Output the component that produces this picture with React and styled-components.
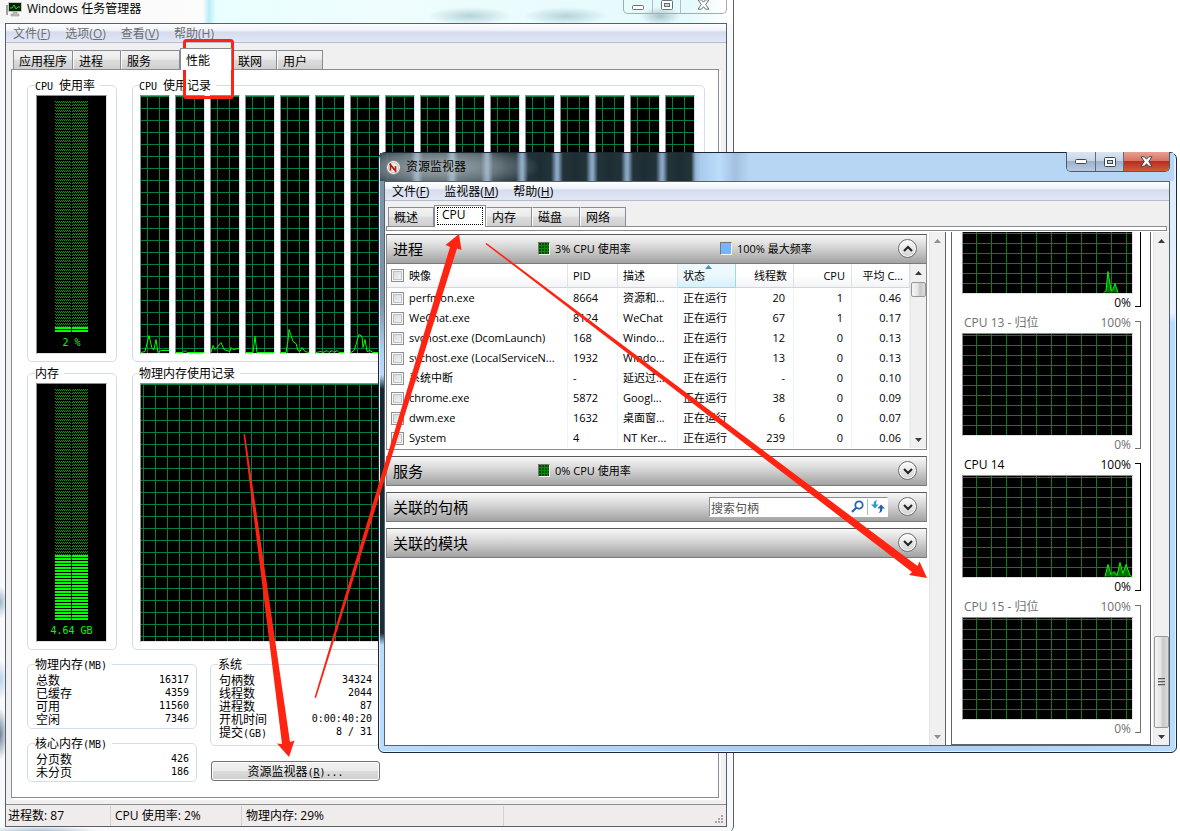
import React from "react";
import styled, { createGlobalStyle, css } from "styled-components";

const ui = `"Open Sans", "Noto Sans CJK SC", sans-serif`;
const song = `"Noto Sans CJK SC", sans-serif`;

const Global = createGlobalStyle`
  *, *::before, *::after { box-sizing: border-box; }
  html, body { margin: 0; background: #fff; }
  body { font: 12px/16px ${ui}; color: #000; overflow: hidden; }
  button, input { font: inherit; color: inherit; margin: 0; padding: 0; border-radius: 0; }
  svg { display: block; flex: none; }
`;

const Desktop = styled.div`
  position: relative;
  min-height: 100vh;
  overflow: hidden;
`;

/* ---------- window frames ---------- */

const TaskWindow = styled.section`
  display: flex;
  flex-direction: column;
  min-height: 100vh;
  margin-right: 446px;
  padding: 0 6px 5px 5px;
  border-right: 1px solid #5c6066;
  border-radius: 0 0 6px 0;
  background:
    radial-gradient(8px 16px at 0 602px, #9fb6cc, transparent),
    radial-gradient(8px 20px at 0 680px, #b9d3ea, transparent),
    radial-gradient(8px 26px at 0 734px, #6e8296, transparent),
    radial-gradient(60px 6px at 40px 100%, #9fb6cc, transparent),
    radial-gradient(42px 9px at 470px 16px, #b4d4da, transparent),
    radial-gradient(42px 9px at 566px 16px, #b4d4da, transparent),
    radial-gradient(20px 9px at 660px 16px, #a9c4cc, transparent),
    linear-gradient(90deg, #f6f6f6, #fcfcfc 203px, #b8eef8 209px, #e9ffff 216px, #effdfd 380px, #e4fafc 690px, #fff 726px) top / 100% 24px no-repeat,
    #f8f9fa;
`;

const MonitorWindow = styled.section`
  position: absolute;
  top: 152px;
  right: 3px;
  bottom: 79px;
  left: 378px;
  display: flex;
  flex-direction: column;
  padding: 0 6px 6px 5px;
  border: 1px solid #1d2733;
  border-radius: 7px 7px 6px 6px;
  box-shadow: inset 0 0 0 1px #e4f2ff;
  background:
    linear-gradient(#8094a8, #7d92a6 150px, #b0d2f5 200px, #b8dcff 222px, #16262c 236px, #1c2e34 480px, #b8dcff 492px, #b8dcff) left / 6px 100% no-repeat,
    linear-gradient(#d7ecfb, #e6f3fc 160px, #b8dcff 170px) right / 7px 100% no-repeat,
    linear-gradient(90deg, #b8dcff, #a8ccf0 60%, #b8dcff) bottom / 100% 7px no-repeat,
    #b8dcff;
`;

const TaskTitle = styled.header`
  display: flex;
  align-items: flex-start;
  gap: 5px;
  height: 23px;
  padding: 1px 0 0 1px;
`;

const MonitorTitle = styled.header`
  display: flex;
  align-items: center;
  gap: 5px;
  height: 28px;
  margin: 0 -4px;
  padding: 0 4px 0 6px;
  background:
    radial-gradient(100px 24px at 60px 14px, rgba(190, 198, 202, 0.85), rgba(170, 182, 190, 0.5) 60%, transparent),
    linear-gradient(90deg, transparent 312px, #a9cbec 320px, #bcdcfb 340px, #a3c0e0 355px, #b6d6f4 370px),
    repeating-linear-gradient(90deg, #22343a 0, #1d2d33 12px, #22343a 23px, #86a3c0 28px, #8ba9c6 30px, #22343a 35px) 8px 0;
`;

const Title = styled.h1`
  margin: 0;
  font-size: 12px;
  line-height: 16px;
  font-weight: 400;
`;

const Caption = styled.div`
  display: flex;
  align-self: flex-start;
  height: ${(p) => (p.$active ? 20 : 14)}px;
  margin: -1px 0 0 auto;
  overflow: hidden;
  border: 1px solid ${(p) => (p.$active ? "#4c5b6c" : "#a3adb0")};
  border-top: 0;
  border-radius: 0 0 5px 5px;
`;

const CaptionButton = styled.button`
  display: flex;
  align-items: ${(p) => (p.$active ? "center" : "flex-end")};
  justify-content: center;
  width: ${(p) => (p.$wide ? 46 : 28)}px;
  padding-bottom: ${(p) => (p.$active ? 0 : 3)}px;
  border: 0;
  border-left: ${(p) => (p.$first ? 0 : 1)}px solid ${(p) => (p.$active ? "#5d6c7d" : "#b4bcbe")};
  background: transparent;
  ${(p) => p.$active && css`background: linear-gradient(#dbe6f1, #c6d5e5 45%, #9db2c9 50%, #b7cbe0);`}
  ${(p) => p.$active && p.$wide && css`background: linear-gradient(#e8a090, #d57566 45%, #b92e1c 50%, #cf5a3a);`}
`;

const Client = styled.div`
  flex: 1;
  display: flex;
  flex-direction: column;
  min-height: 0;
  border: 1px solid #56616c;
  background: #f0f0f0;
`;

/* ---------- shared menu and tabs ---------- */

const MenuBar = styled.nav`
  display: flex;
  align-items: center;
  gap: 15px;
  height: 19px;
  padding: 2px 0 0 7px;
  border-bottom: 1px solid #b6bccc;
  background: linear-gradient(#fff, #f0f3fa 35%, #d6dcee 45%, #e2e7f5);
  color: ${(p) => (p.$dim ? "#6d6d6d" : "#000")};
`;

const MenuItem = styled.button`
  border: 0;
  background: none;
  line-height: 16px;
  white-space: nowrap;
`;

const TabList = styled.div`
  display: flex;
  align-items: flex-end;
  height: ${(p) => (p.$tall ? 26 : 25)}px;
  padding-left: ${(p) => (p.$tall ? 7 : 3)}px;
`;

const Tab = styled.button`
  width: ${(p) => p.$w}px;
  height: 19px;
  padding: 1px 5px 0;
  border: 1px solid #898c95;
  border-bottom: 0;
  border-left-color: ${(p) => (p.$first ? "#898c95" : "#fff")};
  background: linear-gradient(#f2f2f2, #ebebeb 45%, #dcdcdc 50%, #cfcfcf);
  font-family: ${(p) => (p.$song ? song : ui)};
  line-height: 17px;
  text-align: left;
  white-space: nowrap;
  ${(p) => p["aria-selected"] && css`
    z-index: 1;
    height: 22px;
    margin-bottom: -1px;
    padding-bottom: 2px;
    border-left-color: #898c95;
    background: #fff;
  `}
`;

const FocusRing = styled.span`
  display: block;
  height: 18px;
  margin: 0 -3px;
  padding-left: 4px;
  border: 1px dotted #000;
  line-height: 14px;
`;

/* ---------- task manager ---------- */

const PerfPane = styled.main`
  flex: 1;
  display: flex;
  flex-direction: column;
  margin: 0 7px 6px 5px;
  padding: 9px 13px 15px 15px;
  border: 1px solid #898c95;
  box-shadow: 2px 2px 0 #fff;
  background: #fff;
  font-family: ${song};
`;

const ChartGrid = styled.div`
  display: grid;
  grid-template-columns: 90px 1fr;
  gap: 5px 15px;
`;

const Group = styled.fieldset`
  min-width: 0;
  margin: 0;
  padding: ${(p) => (p.$chart ? "4px 9px 7px 7px" : "3px 7px 3px 8px")};
  ${(p) => p.$gauge && css`padding-left: 8px;`}
  border: 1px solid #d3dde6;
  border-radius: 5px;
`;

const Legend = styled.legend`
  padding: 0 5px 0 0;
  margin-left: -1px;
  height: 12px;
  line-height: 12px;
  white-space: nowrap;
`;

const Mono = styled.span`
  font: 10px/8px "DejaVu Sans Mono", monospace;
`;

const sunken = css`
  border: 1px solid;
  border-color: #8c8c8c #e2e2e2 #e2e2e2 #8c8c8c;
`;

const GaugeBox = styled.div`
  ${sunken}
  display: flex;
  flex-direction: column;
  align-items: center;
  gap: 6px;
  height: 259px;
  padding-top: 5px;
  background: #000;
  color: #0f0;
`;

const Histories = styled.div`
  display: flex;
  gap: 5px;
`;

const Plot = styled.div`
  ${sunken}
  flex: ${(p) => (p.$fixed ? "none" : "1 1 0")};
  min-width: 0;
  height: ${(p) => p.$h}px;
  overflow: hidden;
  background:
    linear-gradient(90deg, ${(p) => p.$line} 1px, transparent 1px) ${(p) => p.$x}px 0 / ${(p) => p.$cw}px 100%,
    linear-gradient(${(p) => p.$line} 1px, transparent 1px) 0 ${(p) => p.$y}px / 100% ${(p) => p.$ch}px,
    #000;
`;

const Lower = styled.div`
  display: flex;
  gap: 13px;
  margin-top: 8px;
`;

const Column = styled.div`
  display: flex;
  flex-direction: column;
  gap: ${(p) => p.$gap}px;
  width: 170px;
`;

const Stats = styled.dl`
  margin: 0;
  padding-bottom: ${(p) => (p.$roomy ? 4 : 0)}px;
`;

const Stat = styled.div`
  display: flex;
  justify-content: space-between;
  height: 13px;
  line-height: 13px;
  dt, dd { margin: 0; white-space: nowrap; }
  dd { font: 10px/13px "DejaVu Sans Mono", monospace; }
`;

const ResourceButton = styled.button`
  height: 20px;
  margin-left: 1px;
  border: 1px solid #707070;
  border-radius: 3px;
  box-shadow: inset 0 0 0 1px #fcfcfc;
  background: linear-gradient(#f2f2f2, #ebebeb 48%, #dcdcdc 50%, #cfcfcf);
  line-height: 16px;
`;

const StatusBar = styled.footer`
  display: flex;
  height: 22px;
  border-top: 1px solid #898c95;
  background: #f0ecec;
`;

const StatusCell = styled.span`
  width: ${(p) => p.$w}px;
  margin-top: 1px;
  padding: 1px 0 0 ${(p) => p.$pad}px;
  border-right: 1px solid #d4d0d0;
  line-height: 18px;
  white-space: nowrap;
`;

const Grip = styled.svg`
  align-self: flex-end;
  margin: 0 2px 2px auto;
`;

/* ---------- resource monitor ---------- */

const PaneEdge = styled.div`
  height: 5px;
  margin: 0 2px 0 1px;
  border: 1px solid #898c95;
  background: #fff;
`;

const Body = styled.div`
  flex: 1;
  display: flex;
  min-height: 0;
  padding-top: 1px;
  background: #fff;
`;

const LeftPanel = styled.div`
  flex: 1;
  display: flex;
  min-width: 0;
  margin-right: 5px;
  border-right: 1px solid #5f6468;
`;

const Sections = styled.div`
  flex: 1;
  display: flex;
  flex-direction: column;
  gap: 6px;
  min-width: 0;
  padding: 2px 2px 0 1px;
`;

const SectionHead = styled.header`
  display: flex;
  align-items: center;
  height: 30px;
  padding: 0 9px 1px 6px;
  border: 1px solid #6a6a6a;
  border-color: #5a5a5a #8a8a8a #7a7a7a;
  background: linear-gradient(#f8f8f8, #d4d4d4 45%, #a2a2a2);
  font-size: 11px;
`;

const SectionTitle = styled.h2`
  flex: 0 0 145px;
  margin: 0;
  font: 400 15px/20px ${song};
  white-space: nowrap;
`;

const Meter = styled.span`
  display: flex;
  align-items: center;
  gap: 5px;
  flex: ${(p) => (p.$last ? "none" : "0 0 182px")};
  white-space: nowrap;
`;

const Swatch = styled.i`
  width: 12px;
  height: 13px;
  border: 1px solid;
  border-color: #777 #f4f4f4 #f4f4f4 #777;
  background: ${(p) =>
    p.$blue
      ? "#74b5ff"
      : "radial-gradient(circle at 1px 1px, #004c00 1px, transparent 1px) 0 0 / 3px 3px, #0a8a0a"};
`;

const Round = styled.button`
  display: grid;
  flex: none;
  place-items: center;
  width: 19px;
  height: 19px;
  margin-left: auto;
  border: 1px solid #6f6f6f;
  border-radius: 50%;
  box-shadow: inset 0 0 0 1px #fff;
  background: linear-gradient(#fdfdfd, #d2d2d2);
`;

const Search = styled.div`
  display: flex;
  align-items: center;
  width: 179px;
  height: 20px;
  margin: 0 10px 0 auto;
  padding-left: 1px;
  border: 1px solid #fff;
  border-color: #8f8f8f #fff #fff #8f8f8f;
  background: #fff;
  & + button { margin-left: 0; }
`;

const SearchInput = styled.input`
  flex: 1;
  min-width: 0;
  height: 18px;
  padding-top: 3px;
  border: 0;
  outline: 0;
  background: none;
  font-size: 12px;
  &::placeholder { color: #555; opacity: 1; }
`;

const IconButton = styled.button`
  display: grid;
  place-items: center;
  width: 20px;
  height: 16px;
  border: 0;
  border-left: ${(p) => (p.$split ? 1 : 0)}px solid #b8b8b8;
  background: none;
`;

const TableBox = styled.div`
  display: flex;
  padding-bottom: 1px;
  border: 1px solid #8a8a8a;
  border-top: 0;
`;

const Table = styled.table`
  flex: 1;
  width: 0;
  table-layout: fixed;
  border-collapse: separate;
  border-spacing: 0;
  font-size: 11px;
  line-height: 14px;
`;

const cell = css`
  overflow: hidden;
  padding: 0 ${(p) => (p.$right ? 8 : 2)}px 0 ${(p) => (p.$name ? 4 : 5)}px;
  text-align: ${(p) => (p.$right ? "right" : "left")};
  font-weight: 400;
  white-space: nowrap;
`;

const Th = styled.th`
  ${cell}
  height: 24px;
  border-right: 1px solid #dfe3e8;
  border-bottom: 1px solid #d5d5d5;
  background: linear-gradient(#fff 45%, #f3f4f6);
  ${(p) => p.$right && css`padding-right: 6px;`}
  ${(p) => p.$sorted && css`
    border-color: #96d9f9;
    background: linear-gradient(#eef9fe 45%, #d8f0fb);
  `}
`;

const Td = styled.td`
  ${cell}
  height: 20px;
  border-right: 1px solid #ebf3fc;
`;

const CheckLabel = styled.label`
  display: flex;
  align-items: center;
  gap: 5px;
`;

const Check = styled.input`
  appearance: none;
  flex: none;
  width: 13px;
  height: 13px;
  border: 1px solid #8e8f8f;
  box-shadow: inset 0 0 0 1px #f6f6f6, inset 0 0 0 2px #bfc3c8;
  background: linear-gradient(135deg, #cfd3d8, #fafafa);
`;

const SortMark = styled.svg`
  height: 4px;
  margin: -4px auto 0;
`;

const Bar = styled.div`
  display: flex;
  flex: none;
  flex-direction: column;
  align-items: center;
  width: 16px;
  padding: ${(p) => (p.$small ? "7px 0 6px" : "7px 0 6px")};
  border-left: 1px solid #e6e6e6;
  background: #f0f0f0;
`;

const Thumb = styled.div`
  display: flex;
  flex-direction: column;
  align-items: center;
  justify-content: center;
  gap: 1px;
  width: 15px;
  height: ${(p) => p.$h}px;
  border: 1px solid #979797;
  border-radius: 2px;
  background: linear-gradient(90deg, #f5f5f5, #e4e4e6 45%, #c8c8cc 60%, #dcdce0);
  i { width: 7px; height: 2px; border-top: 1px solid #5a5a5a; background: #bbb; }
`;

const Spacer = styled.span`
  flex: ${(p) => (p.$px ? `0 0 ${p.$px}px` : 1)};
`;

const GraphPanel = styled.aside`
  display: flex;
  flex-direction: column;
  justify-content: flex-end;
  gap: 4px;
  flex: 0 0 200px;
  overflow: hidden;
  margin-right: 2px;
  padding: 0 9px 7px 10px;
  border: 1px solid #5f6468;
  border-top: 0;
`;

const GraphCard = styled.figure`
  display: flex;
  flex: none;
  gap: 2px;
  margin: 0;
  color: ${(p) => (p.$parked ? "#707070" : "#000")};
`;

const GraphMain = styled.div`
  flex: 1;
  display: flex;
  flex-direction: column;
`;

const GraphLabel = styled.figcaption`
  display: flex;
  justify-content: space-between;
  height: 18px;
  padding: 0 2px;
  line-height: 16px;
`;

const GraphZero = styled.span`
  height: 17px;
  padding: 1px 2px 0;
  line-height: 16px;
  text-align: right;
`;

const Bracket = styled.i`
  width: 6px;
  margin: 6px 0 4px;
  border: 1px solid currentColor;
  border-left: 0;
`;

const Annotations = styled.svg`
  position: absolute;
  top: 0;
  left: 0;
  pointer-events: none;
`;

/* ---------- pieces ---------- */

function CaptionButtons({ active }) {
  const ink = active ? "#3c4653" : "#6a7072";
  return (
    <Caption $active={active}>
      <CaptionButton $active={active} $first aria-label="最小化">
        <svg width="12" height="5"><rect x="0.5" y="0.5" width="11" height="4" rx="1" fill="#fff" stroke={ink} /></svg>
      </CaptionButton>
      <CaptionButton $active={active} aria-label="最大化">
        <svg width="12" height="10">
          <rect x="0.5" y="0.5" width="11" height="9" rx="1" fill="#fff" stroke={ink} />
          <rect x="3.5" y="3.5" width="5" height="3" fill="#c4d2e0" stroke={ink} />
        </svg>
      </CaptionButton>
      <CaptionButton $active={active} $wide aria-label="关闭">
        <svg width="13" height="11" viewBox="0 0 13 11">
          <path d="M1 .8h3.4l2.1 2.4L8.600.8H12L8.700 5.500 12 10.200H8.600L6.500 7.700l-2.100 2.500H1l3.300-4.700z" fill="#fff" stroke={ink} />
        </svg>
      </CaptionButton>
    </Caption>
  );
}

function Menu({ items, dim }) {
  return (
    <MenuBar $dim={dim}>
      {items.map(([name, key]) => (
        <MenuItem key={key}>{name}(<u>{key}</u>)</MenuItem>
      ))}
    </MenuBar>
  );
}

function Gauge({ lit, label, id }) {
  const litY = 232 - lit;
  return (
    <GaugeBox>
      <svg width="33" height="232">
        <defs>
          <pattern id={`${id}-off`} width="2" height="3" patternUnits="userSpaceOnUse">
            <rect width="1" height="1" fill="#00a000" />
            <rect x="1" y="1" width="1" height="1" fill="#00a000" />
          </pattern>
          <pattern id={`${id}-on`} width="2" height="3" patternUnits="userSpaceOnUse" y="1">
            <rect width="2" height="2" fill="#00ff00" />
          </pattern>
        </defs>
        {[0, 17].map((x) => (
          <g key={x}>
            <rect x={x} width="16" height={litY} fill={`url(#${id}-off)`} />
            <rect x={x} y={litY} width="16" height={lit} fill={`url(#${id}-on)`} />
          </g>
        ))}
      </svg>
      <Mono>{label}</Mono>
    </GaugeBox>
  );
}

function Spark({ points, width, height, fill = "none" }) {
  if (!points) return null;
  const d = points.map(([x, y]) => `${x},${height - 0.5 - y}`).join(" ");
  return (
    <svg width={width} height={height}>
      <polyline points={d} fill={fill} stroke="#00ff00" strokeWidth="1" />
    </svg>
  );
}

const flat = [[0, 0], [28, 0]];
const coreHistory = [
  [[0, 0], [4, 1], [8, 17], [11, 4], [13, 3], [15, 13], [17, 0], [20, 2], [28, 2]],
  [[0, 0], [7, 0], [9, 2], [11, 0], [28, 0]],
  [[0, 0], [2, 7], [4, 3], [6, 5], [10, 10], [13, 3], [19, 1], [20, 5], [22, 3], [28, 4]],
  [[0, 0], [7, 0], [9, 16], [11, 0], [28, 0]],
  [[0, 0], [5, 0], [7, 12], [8, 23], [12, 11], [15, 9], [17, 2], [19, 1], [21, 5], [24, 1], [28, 0]],
  [[0, 0], [5, 1], [7, 0], [11, 2], [13, 0], [16, 2], [18, 0], [21, 2], [23, 0], [28, 0]],
  [[0, 0], [3, 2], [5, 8], [8, 18], [11, 16], [12, 5], [14, 13], [16, 1], [19, 2], [22, 0], [28, 0]],
  flat, flat, flat, flat, flat, flat, flat, flat, flat,
];

function StatGroup({ title, unit, rows, roomy }) {
  return (
    <Group>
      <Legend>{title}{unit && <Mono>({unit})</Mono>}</Legend>
      <Stats $roomy={roomy}>
        {rows.map(([name, value, suffix]) => (
          <Stat key={name}>
            <dt>{name}{suffix && <Mono>{suffix}</Mono>}</dt>
            <dd>{value}</dd>
          </Stat>
        ))}
      </Stats>
    </Group>
  );
}

function TaskManager() {
  const tabs = [["应用程序", 60], ["进程", 48], ["服务", 59], ["性能", 52], ["联网", 45], ["用户", 46]];
  return (
    <TaskWindow>
      <TaskTitle>
        <svg width="16" height="16" viewBox="0 0 16 16">
          <path d="M0 4h2v10H0z" fill="#9aa09a" />
          <rect x="2.500" y="1.500" width="13" height="9" rx="1" fill="#082008" stroke="#c4c8c4" />
          <path d="M4 7h2l2-3 2 4 2-2h2" fill="none" stroke="#27d027" />
          <path d="M7 11h4v2h2v2H5v-2h2z" fill="#b8bcb8" stroke="#8b908b" strokeWidth="0.5" />
        </svg>
        <Title>Windows 任务管理器</Title>
        <CaptionButtons />
      </TaskTitle>
      <Client>
        <Menu dim items={[["文件", "F"], ["选项", "O"], ["查看", "V"], ["帮助", "H"]]} />
        <TabList $tall role="tablist">
          {tabs.map(([name, w], i) => (
            <Tab key={name} role="tab" $song $w={w} $first={i === 0} aria-selected={name === "性能"}>{name}</Tab>
          ))}
        </TabList>
        <PerfPane>
          <ChartGrid>
            <Group $chart $gauge>
              <Legend><Mono>CPU </Mono>使用率</Legend>
              <Gauge id="cpu" lit={6} label="2 %" />
            </Group>
            <Group $chart>
              <Legend><Mono>CPU </Mono>使用记录</Legend>
              <Histories>
                {coreHistory.map((points, i) => (
                  <Plot key={i} $h={259} $line="#008040" $x={6} $y={12} $cw={12} $ch={12}>
                    <Spark points={points} width={28} height={257} />
                  </Plot>
                ))}
              </Histories>
            </Group>
            <Group $chart $gauge>
              <Legend>内存</Legend>
              <Gauge id="mem" lit={66} label="4.64 GB" />
            </Group>
            <Group $chart>
              <Legend>物理内存使用记录</Legend>
              <Plot $h={259} $line="#008040" $x={2} $y={12} $cw={12} $ch={12} />
            </Group>
          </ChartGrid>
          <Lower>
            <Column $gap={8}>
              <StatGroup title="物理内存" unit="MB" rows={[["总数", "16317"], ["已缓存", "4359"], ["可用", "11560"], ["空闲", "7346"]]} />
              <StatGroup title="核心内存" unit="MB" rows={[["分页数", "426"], ["未分页", "186"]]} />
            </Column>
            <Column $gap={15}>
              <StatGroup
                roomy
                title="系统"
                rows={[["句柄数", "34324"], ["线程数", "2044"], ["进程数", "87"], ["开机时间", "0:00:40:20"], ["提交", "8 / 31", "(GB)"]]}
              />
              <ResourceButton>资源监视器<Mono>(<u>R</u>)...</Mono></ResourceButton>
            </Column>
          </Lower>
        </PerfPane>
        <StatusBar>
          <StatusCell $w={105} $pad={2}>进程数: 87</StatusCell>
          <StatusCell $w={131} $pad={4}>CPU 使用率: 2%</StatusCell>
          <StatusCell $w={262} $pad={4}>物理内存: 29%</StatusCell>
          <Grip width="9" height="9" fill="#a8a4a4">
            <path d="M6 0h2v2H6zM3 3h2v2H3zM6 3h2v2H6zM0 6h2v2H0zM3 6h2v2H3zM6 6h2v2H6z" />
          </Grip>
        </StatusBar>
      </Client>
    </TaskWindow>
  );
}

function ScrollArrow({ down, dim }) {
  return (
    <svg width="7" height="4" viewBox="0 0 7 4">
      <path d={down ? "M0 0h7L3.500 4z" : "M0 4h7L3.500 0z"} fill={dim ? "#8f8f8f" : "#3a3a3a"} />
    </svg>
  );
}

function Toggle({ up, label }) {
  return (
    <Round aria-label={label}>
      <svg width="10" height="8" viewBox="0 0 10 8">
        <path d={up ? "M1 6l4-4 4 4" : "M1 2l4 4 4-4"} fill="none" stroke="#222" strokeWidth="2" />
      </svg>
    </Round>
  );
}

const processes = [
  ["perfmon.exe", "8664", "资源和...", "20", "1", "0.46"],
  ["WeChat.exe", "8124", "WeChat", "67", "1", "0.17"],
  ["svchost.exe (DcomLaunch)", "168", "Windo...", "12", "0", "0.13"],
  ["svchost.exe (LocalServiceN...", "1932", "Windo...", "13", "0", "0.13"],
  ["系统中断", "-", "延迟过...", "-", "0", "0.10"],
  ["chrome.exe", "5872", "Googl...", "38", "0", "0.09"],
  ["dwm.exe", "1632", "桌面窗...", "6", "0", "0.07"],
  ["System", "4", "NT Ker...", "239", "0", "0.06"],
];

function ProcessTable() {
  return (
    <TableBox>
      <Table>
        <colgroup>
          <col />
          <col width="50" />
          <col width="60" />
          <col width="58" />
          <col width="58" />
          <col width="58" />
          <col width="58" />
        </colgroup>
        <thead>
          <tr>
            <Th $name><CheckLabel><Check type="checkbox" />映像</CheckLabel></Th>
            <Th>PID</Th>
            <Th>描述</Th>
            <Th $sorted>
              <SortMark width="7" height="4"><path d="M0 4h7L3.500 0z" fill="#4a90b8" /></SortMark>
              状态
            </Th>
            <Th $right>线程数</Th>
            <Th $right>CPU</Th>
            <Th $right>平均 C...</Th>
          </tr>
        </thead>
        <tbody>
          {processes.map(([name, pid, desc, threads, cpu, avg]) => (
            <tr key={name}>
              <Td $name><CheckLabel><Check type="checkbox" />{name}</CheckLabel></Td>
              <Td>{pid}</Td>
              <Td>{desc}</Td>
              <Td>正在运行</Td>
              <Td $right>{threads}</Td>
              <Td $right>{cpu}</Td>
              <Td $right>{avg}</Td>
            </tr>
          ))}
        </tbody>
      </Table>
      <Bar>
        <ScrollArrow />
        <Spacer $px={7} />
        <Thumb $h={15} />
        <Spacer />
        <ScrollArrow down />
      </Bar>
    </TableBox>
  );
}

/* The first core is scrolled half out of view, so its caption row stays empty. */
const cores = [
  { id: 12, points: [[141, 0], [143, 2], [145, 21], [148, 2], [150, 3], [152, 9], [155, 0]] },
  { id: 13, name: "CPU 13 - 归位", parked: true },
  { id: 14, name: "CPU 14", points: [[142, 0], [145, 12], [148, 2], [151, 5], [154, 1], [157, 14], [160, 3], [163, 12], [167, 1], [169, 0]] },
  { id: 15, name: "CPU 15 - 归位", parked: true },
];

function ResourceMonitor() {
  const tabs = [["概述", 46], ["CPU", 52], ["内存", 46], ["磁盘", 48], ["网络", 46]];
  return (
    <MonitorWindow>
      <MonitorTitle>
        <svg width="15" height="15" viewBox="0 0 15 15">
          <circle cx="7.500" cy="7.500" r="7" fill="#f6f6f6" stroke="#7b7b7b" />
          <circle cx="7.500" cy="7.500" r="5" fill="#e9efe9" stroke="#b9c4b9" />
          <path d="M4.500 10.500V4.500l5 6.500V6" fill="none" stroke="#d01818" strokeWidth="1.600" />
          <path d="M3.500 4l5 6" stroke="#901010" strokeWidth="1" />
        </svg>
        <Title>资源监视器</Title>
        <CaptionButtons active />
      </MonitorTitle>
      <Client>
        <Menu items={[["文件", "F"], ["监视器", "M"], ["帮助", "H"]]} />
        <TabList role="tablist">
          {tabs.map(([name, w], i) => (
            <Tab key={name} role="tab" $w={w} $first={i === 0} aria-selected={name === "CPU"}>
              {name === "CPU" ? <FocusRing>{name}</FocusRing> : name}
            </Tab>
          ))}
        </TabList>
        <PaneEdge />
        <Body>
          <LeftPanel>
            <Sections>
              <section>
                <SectionHead>
                  <SectionTitle>进程</SectionTitle>
                  <Meter><Swatch />3% CPU 使用率</Meter>
                  <Meter $last><Swatch $blue />100% 最大频率</Meter>
                  <Toggle up label="收起进程" />
                </SectionHead>
                <ProcessTable />
              </section>
              <SectionHead>
                <SectionTitle>服务</SectionTitle>
                <Meter><Swatch />0% CPU 使用率</Meter>
                <Toggle label="展开服务" />
              </SectionHead>
              <SectionHead>
                <SectionTitle>关联的句柄</SectionTitle>
                <Search>
                  <SearchInput placeholder="搜索句柄" aria-label="搜索句柄" />
                  <IconButton aria-label="搜索">
                    <svg width="13" height="13" viewBox="0 0 13 13" fill="none" stroke="#2a66b0">
                      <circle cx="8" cy="5" r="3.700" strokeWidth="1.800" />
                      <path d="M5.200 7.800L1 12" strokeWidth="2.200" />
                    </svg>
                  </IconButton>
                  <IconButton $split aria-label="刷新">
                    <svg width="14" height="13" viewBox="0 0 14 13">
                      <path d="M6.500 0C3.500.2 2.500 2 2.700 4.500H0l4 4 3.500-4H5C5 2.500 5 1 6.500 0z" fill="#2b9ad0" />
                      <path d="M7.500 13c3-.2 4-2 3.800-4.500H14l-4-4-3.500 4H9c0 2 0 3.500-1.500 4.500z" fill="#2560a8" />
                    </svg>
                  </IconButton>
                </Search>
                <Toggle label="展开关联的句柄" />
              </SectionHead>
              <SectionHead>
                <SectionTitle>关联的模块</SectionTitle>
                <Toggle label="展开关联的模块" />
              </SectionHead>
            </Sections>
            <Bar>
              <ScrollArrow dim />
              <Spacer />
              <ScrollArrow down dim />
            </Bar>
          </LeftPanel>
          <GraphPanel>
            {cores.map(({ id, name, parked, points }) => (
              <GraphCard key={id} $parked={parked}>
                <GraphMain>
                  <GraphLabel>{name && <><span>{name}</span><span>100%</span></>}</GraphLabel>
                  <Plot $fixed $h={103} $line="#0a8014" $x={13} $y={11} $cw={15} $ch={10}>
                    <Spark points={points} width={169} height={101} fill="#007000" />
                  </Plot>
                  <GraphZero>0%</GraphZero>
                </GraphMain>
                <Bracket />
              </GraphCard>
            ))}
          </GraphPanel>
          <Bar>
            <ScrollArrow />
            <Spacer />
            <Thumb $h={92}><i /><i /><i /></Thumb>
            <Spacer $px={7} />
            <ScrollArrow down />
          </Bar>
        </Body>
      </Client>
    </MonitorWindow>
  );
}

export default function App() {
  return (
    <>
      <Global />
      <Desktop>
        <TaskManager />
        <ResourceMonitor />
        <Annotations width="1180" height="831" fill="#ff2412">
          <rect x="184.500" y="40.500" width="48" height="57" rx="2" fill="none" stroke="#ff2412" strokeWidth="3" />
          <path d="M243.500 434h1.500L290 742l4.500-1.500L289 757l-12-13.500 5 .5z" />
          <path d="M314.500 697.500L450 247l-4.500-2L459 234l2.500 16-4.500-1.500L316 698z" />
          <path d="M485.500 244l1-1L917.500 566l2-4.500L927 578l-18-3 3-3z" />
        </Annotations>
      </Desktop>
    </>
  );
}
